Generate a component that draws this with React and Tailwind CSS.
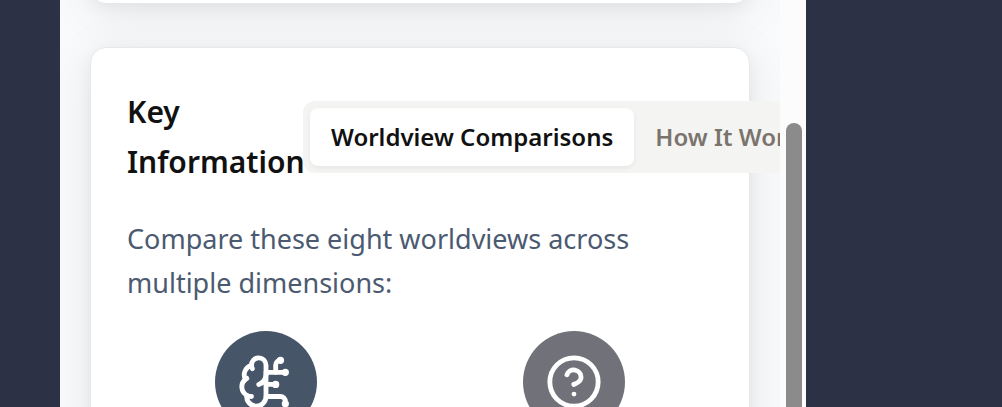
import { BrainCircuit, CircleQuestionMark } from "lucide-react";

const tabs = ["Worldview Comparisons", "How It Works"];

const worldviews = [
  { label: "Materialism", Icon: BrainCircuit, color: "bg-[#475569]" },
  { label: "Agnosticism", Icon: CircleQuestionMark, color: "bg-[#71717a]" },
];

const cardClass =
  "rounded-2xl border border-[#e9e8e8] bg-white shadow-[0_8px_50px_rgba(0,0,0,0.08),0_4px_16px_rgba(0,0,0,0.05)]";

function TabBar() {
  return (
    <div role="tablist" className="flex shrink-0 rounded-xl bg-[#f4f4f2] p-[7px]">
      {tabs.map((tab, i) => (
        <button
          key={tab}
          type="button"
          role="tab"
          aria-selected={i === 0}
          className={
            i === 0
              ? "rounded-lg bg-white px-[21px] py-[11px] text-[24px] leading-9 font-semibold whitespace-nowrap text-[#111111] shadow-[0_2px_5px_rgba(0,0,0,0.06)]"
              : "rounded-lg px-[21px] py-[11px] text-[24px] leading-9 font-semibold whitespace-nowrap text-[#7b746e]"
          }
        >
          {tab}
        </button>
      ))}
    </div>
  );
}

export default function App() {
  return (
    <div className="h-screen overflow-hidden bg-[#2c3146] pr-[196px] pl-[60px] font-['Noto_Sans','Open_Sans',sans-serif]">
      <div className="flex h-full">
        <main className="min-w-0 flex-1 overflow-hidden bg-[#f8fafc] px-[30px]">
          <div className={`-mt-[156px] h-40 ${cardClass}`} />
          <section className={`mt-[43px] px-9 pt-[39px] pb-9 ${cardClass}`}>
            <header className="flex items-center">
              <h2 className="w-44 shrink-0 text-[30px] leading-[50px] font-semibold text-[#111111]">
                Key Information
              </h2>
              <TabBar />
            </header>
            <p className="mt-[30px] text-[27px] leading-[44px] text-[#4b5a70]">
              Compare these eight worldviews across multiple dimensions:
            </p>
            <ul className="mt-[26px] grid grid-cols-2 gap-[31px]">
              {worldviews.map(({ label, Icon, color }) => (
                <li key={label} className="flex justify-center">
                  <span
                    role="img"
                    aria-label={label}
                    className={`flex size-[102px] items-center justify-center rounded-full text-white ${color}`}
                  >
                    <Icon size={58} strokeWidth={2} />
                  </span>
                </li>
              ))}
            </ul>
          </section>
        </main>
        <div aria-hidden="true" className="w-[26px] bg-[#fcfcfc] pt-[123px] pr-1 pl-1.5">
          <div className="h-full rounded-t-full bg-[#8b8b8b]" />
        </div>
      </div>
    </div>
  );
}
